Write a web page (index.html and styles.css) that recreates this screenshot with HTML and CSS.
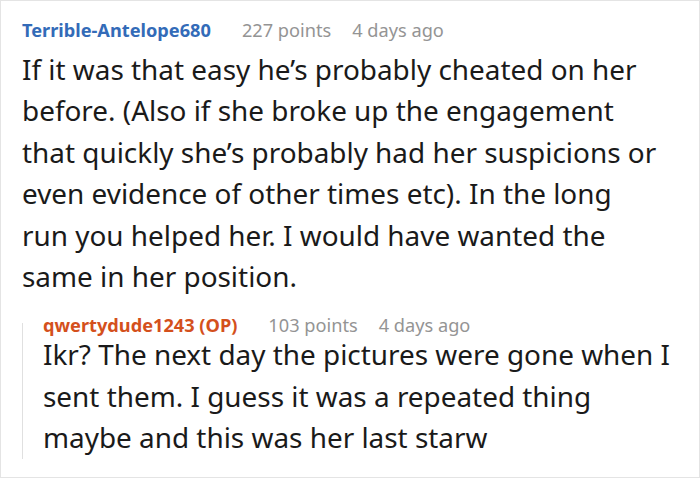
FILE: index.html
```html
<!DOCTYPE html>
<html>
<head>
<meta charset="utf-8">
<link rel="stylesheet" href="styles.css">
</head>
<body>
<div class="thread">
  <div class="comment">
    <div class="meta">
      <span class="author">Terrible-Antelope680</span>
      <span class="points">227 points</span>
      <span class="time">4 days ago</span>
    </div>
    <p class="text">If it was that easy he’s probably cheated on her<br>before. (Also if she broke up the engagement<br>that quickly she’s probably had her suspicions or<br>even evidence of other times etc). In the long<br>run you helped her. I would have wanted the<br>same in her position.</p>
    <div class="reply">
      <div class="meta">
        <span class="author op">qwertydude1243 (OP)</span>
        <span class="points">103 points</span>
        <span class="time">4 days ago</span>
      </div>
      <p class="text">Ikr? The next day the pictures were gone when I<br>sent them. I guess it was a repeated thing<br>maybe and this was her last starw</p>
    </div>
  </div>
</div>
</body>
</html>
```
FILE: styles.css
```css
html, body {
  margin: 0;
  padding: 0;
  background: #fff;
}
.thread {
  width: 700px;
  height: 478px;
  box-sizing: border-box;
  border: 1px solid #e4e4e4;
  overflow: hidden;
  font-family: "Noto Sans", "Open Sans", sans-serif;
}
.comment {
  padding: 17px 20px 0 21px;
}
.meta {
  display: flex;
  align-items: baseline;
  font-size: 18.2px;
  line-height: 24px;
}
.author {
  font-weight: bold;
  color: #336bb8;
  margin-right: 31px;
}
.author.op {
  color: #d4501c;
}
.points {
  color: #949494;
  margin-right: 21px;
}
.time {
  color: #949494;
}
.text {
  margin: 7px 0 0 0;
  font-size: 27.9px;
  line-height: 41.4px;
  color: #1a1a1a;
  white-space: nowrap;
}
.text.wide {
  word-spacing: 2px;
}
.reply {
  margin-top: 19px;
  padding-left: 21px;
  background: linear-gradient(#e0e0e0, #e0e0e0) no-repeat 0 7px / 1px calc(100% - 6px);
}
.reply .meta {
  line-height: 18px;
}
.reply .text {
  margin-top: 0;
}
```
